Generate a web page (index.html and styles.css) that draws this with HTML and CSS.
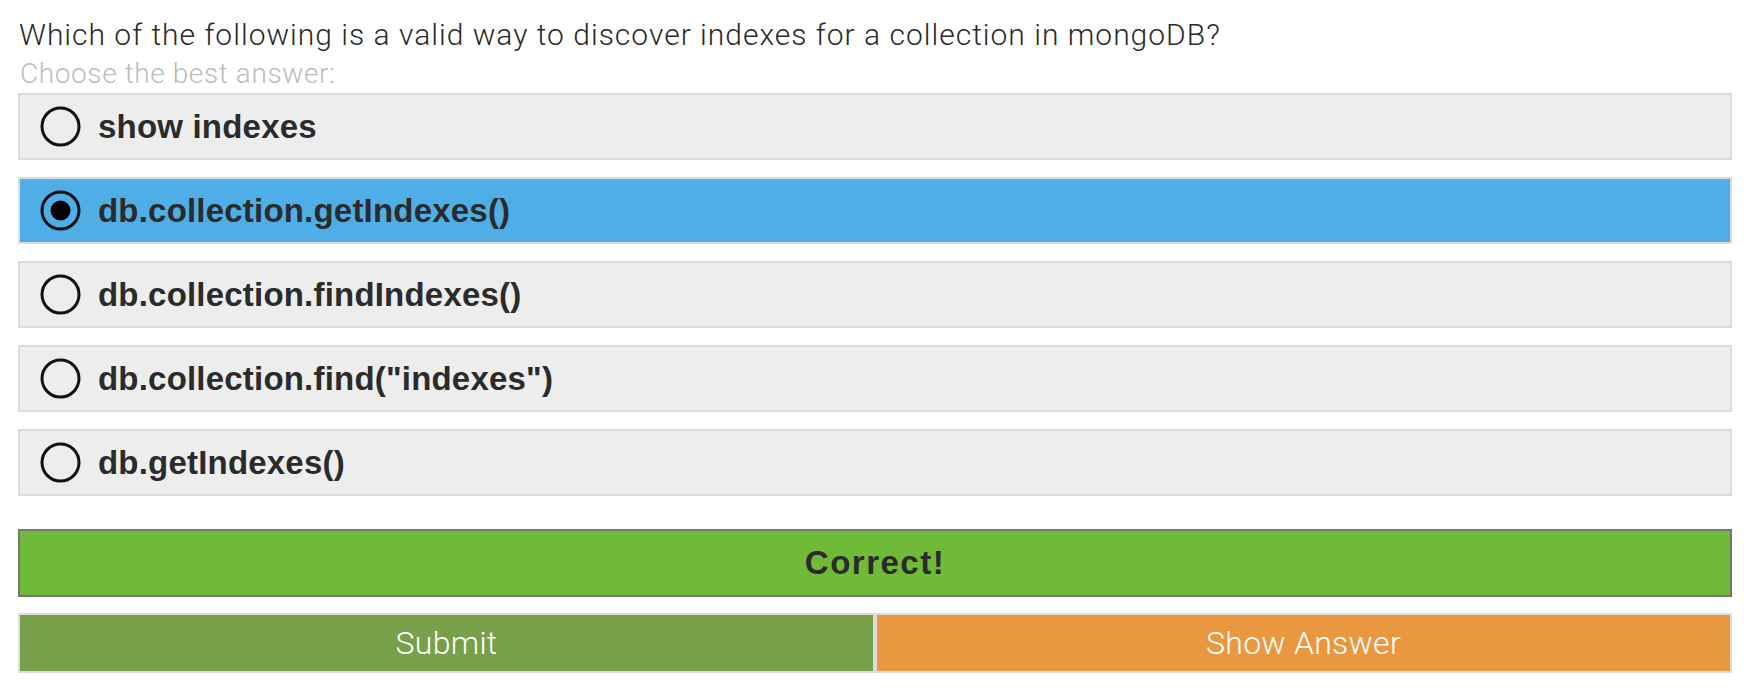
FILE: index.html
```html
<!DOCTYPE html>
<html lang="en">
<head>
<meta charset="utf-8">
<title>Quiz</title>
<link rel="stylesheet" href="styles.css">
</head>
<body>
<div class="quiz">
  <div class="question">Which of the following is a valid way to discover indexes for a collection in mongoDB?</div>
  <div class="hint">Choose the best answer:</div>
  <div class="options">
    <div class="option">
      <svg class="radio" viewBox="0 0 41 41" width="41" height="41"><circle cx="20.5" cy="20.5" r="18.5" fill="none" stroke="#111" stroke-width="3"/></svg>
      <span class="label">show indexes</span>
    </div>
    <div class="option selected">
      <svg class="radio" viewBox="0 0 41 41" width="41" height="41"><circle cx="20.5" cy="20.5" r="18.5" fill="none" stroke="#111" stroke-width="3"/><circle cx="20.5" cy="20.5" r="10" fill="#000"/></svg>
      <span class="label">db.collection.getIndexes()</span>
    </div>
    <div class="option">
      <svg class="radio" viewBox="0 0 41 41" width="41" height="41"><circle cx="20.5" cy="20.5" r="18.5" fill="none" stroke="#111" stroke-width="3"/></svg>
      <span class="label">db.collection.findIndexes()</span>
    </div>
    <div class="option">
      <svg class="radio" viewBox="0 0 41 41" width="41" height="41"><circle cx="20.5" cy="20.5" r="18.5" fill="none" stroke="#111" stroke-width="3"/></svg>
      <span class="label">db.collection.find("indexes")</span>
    </div>
    <div class="option">
      <svg class="radio" viewBox="0 0 41 41" width="41" height="41"><circle cx="20.5" cy="20.5" r="18.5" fill="none" stroke="#111" stroke-width="3"/></svg>
      <span class="label">db.getIndexes()</span>
    </div>
  </div>
  <div class="result">Correct!</div>
  <div class="actions">
    <button class="btn submit">Submit</button>
    <button class="btn answer">Show Answer</button>
  </div>
</div>
</body>
</html>
```

FILE: styles.css
```css
html, body {
  margin: 0;
  padding: 0;
  background: #ffffff;
}

.quiz {
  margin-left: 18px;
  width: 1714px;
  padding-top: 15px;
  font-family: "Liberation Sans", Arial, sans-serif;
}

.question {
  font-family: Roboto, "Liberation Sans", sans-serif;
  font-weight: 300;
  font-size: 30px;
  letter-spacing: 1px;
  line-height: 39px;
  color: #2a2a2a;
  padding-left: 1px;
}

.hint {
  font-family: Roboto, "Liberation Sans", sans-serif;
  font-weight: 300;
  font-size: 28px;
  letter-spacing: 0.6px;
  line-height: 39px;
  color: #bcbcbc;
  padding-left: 2px;
}

.options {
  display: flex;
  flex-direction: column;
  gap: 17px;
}

.option {
  display: flex;
  align-items: center;
  gap: 17px;
  height: 67px;
  box-sizing: border-box;
  border: 2px solid #dcdcdc;
  background: #ededed;
  padding-left: 20px;
}

.option.selected {
  background: #4faee6;
}

.radio {
  display: block;
  flex: none;
}

.label {
  font-weight: 700;
  font-size: 33px;
  letter-spacing: 0.2px;
  color: #2b2b2b;
}

.result {
  margin-top: 33px;
  height: 68px;
  box-sizing: border-box;
  border: 2px solid #757575;
  background: #6fba37;
  display: flex;
  align-items: center;
  justify-content: center;
  font-weight: 700;
  font-size: 33px;
  letter-spacing: 1.5px;
  color: #2b2b2b;
}

.actions {
  margin-top: 16px;
  display: flex;
}

.btn {
  flex: 1 1 0;
  height: 60px;
  box-sizing: border-box;
  border: 2px solid #dcdcdc;
  margin: 0;
  padding: 0;
  font-family: Roboto, "Liberation Sans", sans-serif;
  font-weight: 300;
  font-size: 32px;
  letter-spacing: 0.3px;
  color: #ffffff;
  cursor: pointer;
}

.btn.submit {
  background: #78a04a;
}

.btn.answer {
  background: #e9983f;
}
```
